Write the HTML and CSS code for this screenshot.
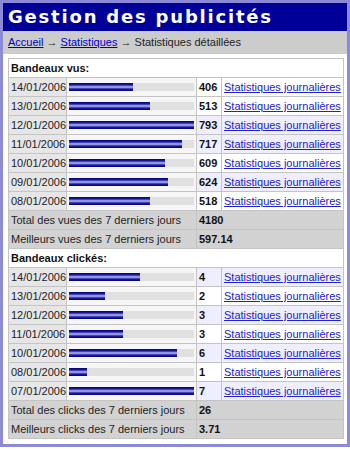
FILE: index.html
```html
<!DOCTYPE html>
<html lang="fr">
<head>
  <meta charset="UTF-8" />
  <title>Gestion des publicités</title>
  <link rel="stylesheet" href="styles.css">
</head>
<body>

<div class="page">
  <h1>Gestion des publicités</h1>

  <div class="crumbs">
    <a href="#">Accueil</a> &rarr; <a href="#">Statistiques</a> &rarr; Statistiques détaillées
  </div>

  <div class="content">
    <table class="stats">
      <colgroup>
        <col class="c-date" />
        <col class="c-bar" />
        <col class="c-num" />
        <col class="c-link" />
      </colgroup>

      <!-- vues -->
      <tr class="section"><td colspan="4">Bandeaux vus:</td></tr>
      <tr>
        <td class="date">14/01/2006</td>
        <td class="graph"><div class="track"><div class="bar" style="width:51%"></div></div></td>
        <td class="num">406</td>
        <td class="link"><a href="#">Statistiques journalières</a></td>
      </tr>
      <tr>
        <td class="date">13/01/2006</td>
        <td class="graph"><div class="track"><div class="bar" style="width:65%"></div></div></td>
        <td class="num">513</td>
        <td class="link"><a href="#">Statistiques journalières</a></td>
      </tr>
      <tr class="alt">
        <td class="date">12/01/2006</td>
        <td class="graph"><div class="track"><div class="bar" style="width:100%"></div></div></td>
        <td class="num">793</td>
        <td class="link"><a href="#">Statistiques journalières</a></td>
      </tr>
      <tr class="alt">
        <td class="date">11/01/2006</td>
        <td class="graph"><div class="track"><div class="bar" style="width:90%"></div></div></td>
        <td class="num">717</td>
        <td class="link"><a href="#">Statistiques journalières</a></td>
      </tr>
      <tr>
        <td class="date">10/01/2006</td>
        <td class="graph"><div class="track"><div class="bar" style="width:77%"></div></div></td>
        <td class="num">609</td>
        <td class="link"><a href="#">Statistiques journalières</a></td>
      </tr>
      <tr class="alt">
        <td class="date">09/01/2006</td>
        <td class="graph"><div class="track"><div class="bar" style="width:79%"></div></div></td>
        <td class="num">624</td>
        <td class="link"><a href="#">Statistiques journalières</a></td>
      </tr>
      <tr>
        <td class="date">08/01/2006</td>
        <td class="graph"><div class="track"><div class="bar" style="width:65%"></div></div></td>
        <td class="num">518</td>
        <td class="link"><a href="#">Statistiques journalières</a></td>
      </tr>
      <tr class="total">
        <td colspan="2">Total des vues des 7 derniers jours</td>
        <td colspan="2" class="num">4180</td>
      </tr>
      <tr class="total">
        <td colspan="2">Meilleurs vues des 7 derniers jours</td>
        <td colspan="2" class="num">597.14</td>
      </tr>

      <!-- clicks -->
      <tr class="section"><td colspan="4">Bandeaux clickés:</td></tr>
      <tr class="alt">
        <td class="date">14/01/2006</td>
        <td class="graph"><div class="track"><div class="bar" style="width:57%"></div></div></td>
        <td class="num">4</td>
        <td class="link"><a href="#">Statistiques journalières</a></td>
      </tr>
      <tr>
        <td class="date">13/01/2006</td>
        <td class="graph"><div class="track"><div class="bar" style="width:29%"></div></div></td>
        <td class="num">2</td>
        <td class="link"><a href="#">Statistiques journalières</a></td>
      </tr>
      <tr class="alt">
        <td class="date">12/01/2006</td>
        <td class="graph"><div class="track"><div class="bar" style="width:43%"></div></div></td>
        <td class="num">3</td>
        <td class="link"><a href="#">Statistiques journalières</a></td>
      </tr>
      <tr>
        <td class="date">11/01/2006</td>
        <td class="graph"><div class="track"><div class="bar" style="width:43%"></div></div></td>
        <td class="num">3</td>
        <td class="link"><a href="#">Statistiques journalières</a></td>
      </tr>
      <tr class="alt">
        <td class="date">10/01/2006</td>
        <td class="graph"><div class="track"><div class="bar" style="width:86%"></div></div></td>
        <td class="num">6</td>
        <td class="link"><a href="#">Statistiques journalières</a></td>
      </tr>
      <tr>
        <td class="date">08/01/2006</td>
        <td class="graph"><div class="track"><div class="bar" style="width:14%"></div></div></td>
        <td class="num">1</td>
        <td class="link"><a href="#">Statistiques journalières</a></td>
      </tr>
      <tr class="alt">
        <td class="date">07/01/2006</td>
        <td class="graph"><div class="track"><div class="bar" style="width:100%"></div></div></td>
        <td class="num">7</td>
        <td class="link"><a href="#">Statistiques journalières</a></td>
      </tr>
      <tr class="total">
        <td colspan="2">Total des clicks des 7 derniers jours</td>
        <td colspan="2" class="num">26</td>
      </tr>
      <tr class="total">
        <td colspan="2">Meilleurs clicks des 7 derniers jours</td>
        <td colspan="2" class="num">3.71</td>
      </tr>
    </table>
  </div>
</div>

</body>
</html>
```

FILE: styles.css
```css
body {
  margin: 0;
  background: #fff;
  font-family: "Liberation Sans", Arial, sans-serif;
  font-size: 11px;
  color: #222;
}

.page {
  width: 344px;
  border: 3px solid #8a8ad6;
}

h1 {
  margin: 0;
  height: 28px;
  padding-left: 5px;
  background: #000099;
  color: #fff;
  font-family: "DejaVu Sans", Verdana, sans-serif;
  font-size: 18px;
  font-weight: bold;
  line-height: 28px;
  letter-spacing: 1.8px;
}

.crumbs {
  height: 23px;
  line-height: 23px;
  padding-left: 5px;
  background: #cccccc;
  color: #222;
}

.crumbs a {
  color: #0000cc;
}

.content {
  padding: 4px 1px 5px 5px;
}

.stats {
  width: 335px;
  border-collapse: collapse;
  border: 1px solid #b8b8b8;
  table-layout: fixed;
}

.c-date { width: 58px; }
.c-bar { width: 130px; }
.c-num { width: 25px; }
.c-link { width: 122px; }

.stats td {
  border: 1px solid #c4c4c4;
  padding: 0 2px;
  height: 18px;
  line-height: 18px;
  white-space: nowrap;
  overflow: hidden;
}

.section td {
  background: #fff;
  font-weight: bold;
  color: #111;
}

.date {
  background: #e6e6e6;
}

.graph {
  background: #f6f6f6;
}

.track {
  height: 8px;
  width: 125px;
  background: #e0e0e0;
}

.bar {
  height: 8px;
  background: linear-gradient(#00007a 0, #1c1ca0 25%, #b8bcf4 50%, #1c1ca0 75%, #00007a 100%);
}

.num {
  font-weight: bold;
  color: #111;
  background: #fff;
}

.link {
  background: #fff;
}

.alt .num,
.alt .link {
  background: #eeeeff;
}

.link a {
  color: #2222cc;
}

.total td {
  background: #d2d2d2;
}
```
